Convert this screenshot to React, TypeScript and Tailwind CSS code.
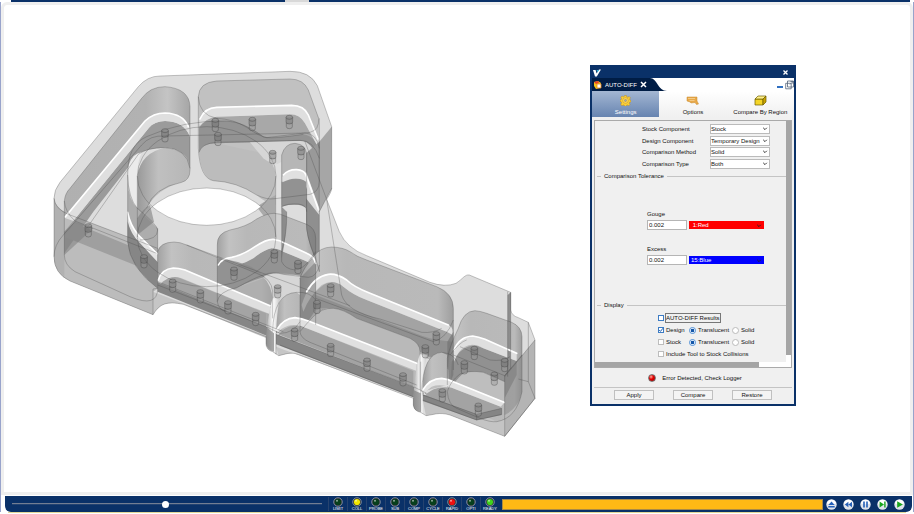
import { useState } from 'react'

const pins = [
  [345, 197], [496, 166], [607, 163], [718, 157], [504, 208], [668, 262], [753, 250],
  [115, 482], [282, 575], [673, 560], [744, 592], [552, 612], [683, 665],
  [368, 648], [451, 680], [534, 713], [617, 748], [842, 662], [801, 712],
  [734, 795], [842, 841], [951, 885], [1059, 929], [1159, 806], [1126, 845],
  [1273, 850], [1364, 886], [1243, 893], [1333, 927], [1177, 977], [1285, 1020],
]

const formRows = [
  { label: 'Stock Component', value: 'Stock' },
  { label: 'Design Component', value: 'Temporary Design' },
  { label: 'Comparison Method', value: 'Solid' },
  { label: 'Comparison Type', value: 'Both' },
]

const leds = [
  { label: 'LIMIT', color: '#07401c' },
  { label: 'COLL', color: '#f2e600' },
  { label: 'PROBE', color: '#07401c' },
  { label: 'SUB', color: '#07401c' },
  { label: 'COMP', color: '#07401c' },
  { label: 'CYCLE', color: '#07401c' },
  { label: 'RAPID', color: '#f01010' },
  { label: 'OPTI', color: '#07401c' },
  { label: 'READY', color: '#3fd21c' },
]

const playback = [
  { name: 'Reset', color: '#2560b8', path: 'M5.5 2.5 8.7 6H2.3ZM2.3 7h6.4v1.4H2.3Z' },
  { name: 'Rewind', color: '#2560b8', path: 'M5.4 2.7v5.6L1.8 5.5ZM9 2.7v5.6L5.4 5.5Z' },
  { name: 'Pause', color: '#2560b8', path: 'M3.2 2.5h1.6v6H3.2ZM6.2 2.5h1.6v6H6.2Z' },
  { name: 'Step', color: '#17a51c', path: 'M2.6 2.4v6.2L7 5.5ZM7.2 2.4h1.4v6.2H7.2Z' },
  { name: 'Play', color: '#17a51c', path: 'M3.2 2.2v6.6L8.9 5.5Z' },
]

const outline =
  'M12 400Q12 375 30 352L265 65Q292 33 330 33L720 19Q780 18 802 62L845 185V370Q845 380 830 403L868 500Q890 550 950 572L1140 652Q1185 668 1218 655C1240 640 1245 628 1258 630L1382 682V735Q1385 752 1405 758L1435 772L1455 825V1000L1364 1114L1200 1050C1165 1040 1150 1050 1128 1052L1112 1042Q1092 1038 1090 1020V1000L745 868C720 860 705 868 686 872L668 860Q648 855 648 835V815L400 718C350 708 330 715 309 749L60 648Q12 625 12 575Z'

const edges = [
  // left pocket
  'M43 408Q45 385 60 370L275 100Q300 65 345 65Q418 70 420 125V315Q420 345 395 352Q310 368 290 430',
  'M12 400Q15 432 55 448L323 550M43 408Q45 440 75 468L320 565M43 408V570Q43 600 75 620L240 695Q323 730 323 670V490',
  'M12 575Q12 540 40 510L275 240Q300 210 345 213L765 204Q800 205 808 250M110 490L265 268Q290 248 345 248Q410 250 420 310',
  // bore
  'M233 330Q232 240 290 215Q400 165 530 168Q580 170 640 215Q655 224 760 208M233 330Q235 400 262 430Q323 480 323 495Q323 525 270 525M233 330V530Q240 610 323 670',
  'M262 333V516M677 333V516',
  // upper pocket
  'M445 95Q447 52 500 48L720 42Q760 42 775 75L806 160Q808 195 780 202L650 218Q630 215 590 187Q550 162 500 160Q447 150 445 95V250Q450 340 490 347Q560 350 620 390Q650 405 675 401L780 388Q808 380 808 350V160',
  'M447 262Q455 235 500 232L750 226Q790 225 808 280M845 370L808 440',
  // narrow pocket
  'M695 590V270Q705 235 735 235Q765 238 770 265V490Q775 530 797 580L808 620V230M695 425Q712 415 745 417Q770 420 770 440M695 590Q705 612 735 615Q760 610 775 590L797 560M695 560Q712 500 710 440',
  'M765 230L830 403L875 690Q890 740 990 762L1115 802Q1150 805 1175 790',
  // centre pocket
  'M502 540Q500 505 540 495Q590 485 620 462Q650 445 672 445Q690 445 710 455L770 478Q797 490 797 520V780M502 540V710Q505 735 530 740M502 710Q505 680 560 668Q610 640 640 630Q670 618 700 628L775 637Q800 636 808 600',
  // lower left pocket
  'M323 560Q330 532 372 531Q390 531 410 540L620 625Q665 640 668 680V760M323 660L648 785L690 805Q730 805 750 770M323 650L700 800M410 540L900 722',
  'M309 749V672L323 670',
  // long pocket
  'M750 800V640Q760 610 790 575Q810 547 845 546Q880 547 900 560Q920 575 950 585L1160 665Q1210 685 1210 730V915M797 700L1150 830Q1190 820 1210 765',
  'M750 800Q770 775 790 755Q815 728 850 730Q880 732 920 760L1080 820Q1110 835 1110 860V975M668 800Q670 685 740 682Q780 680 797 705M750 800Q752 820 780 832L1100 960M678 808L1090 965L1130 985M690 840L1090 995M678 805V868',
  // end pocket
  'M1192 960V880Q1200 840 1225 790Q1240 738 1275 737Q1290 738 1310 745L1385 772Q1415 785 1416 815V980Q1400 1060 1340 1070Q1320 1072 1290 1060L1220 1030Q1195 1020 1192 980Q1200 950 1230 927Q1260 915 1300 922L1364 950',
  'M1115 980Q1120 865 1175 862Q1215 865 1225 900M1200 870Q1230 830 1250 825M1210 870L1364 932L1416 870M1364 932V1114L1455 1000L1435 950L1405 942M1455 825L1364 935M1373 680V935M1382 682V910L1364 932M1435 772V950M1230 845L1320 885Q1360 890 1380 875',
  'M1118 990L1280 1048L1355 1030V1048L1280 1065L1118 1005M1280 1048V1065M1112 890V1040',
]

const highlights = [
  'M46 455L285 168Q310 144 345 144Q400 146 415 185',
  'M450 162Q465 128 500 127L725 121Q762 121 775 150L804 222',
  'M233 442Q240 480 265 510L321 566',
  'M700 330Q715 313 740 314Q762 316 767 328L806 435',
  'M505 600Q515 580 545 577Q580 570 615 545Q650 522 670 523Q690 525 705 535L770 565Q793 575 797 595',
  'M325 645Q335 612 370 609Q385 609 405 615L660 722',
  'M770 680Q795 634 835 628Q860 625 890 645Q910 665 960 685L1195 780',
  'M680 795Q700 760 735 758Q755 760 775 768L1100 895',
  'M1212 855Q1228 815 1268 813Q1285 815 1305 823L1400 865',
  'M1118 975Q1140 940 1175 940Q1195 942 1210 950L1362 1012',
]

function MachinedPart() {
  return (
    <svg viewBox="0 0 1470 1125" className="w-[490px] shrink-0" role="img" aria-label="Translucent design model">
      <defs>
        <linearGradient id="wall">
          <stop offset="0" stopColor="#a2a2a2" />
          <stop offset=".12" stopColor="#c2c2c2" />
          <stop offset=".3" stopColor="#b8b8b8" />
          <stop offset=".9" stopColor="#bababa" />
          <stop offset="1" stopColor="#9e9e9e" />
        </linearGradient>
        <linearGradient id="corner">
          <stop offset="0" stopColor="#b0b0b0" />
          <stop offset=".65" stopColor="#b2b2b2" />
          <stop offset=".82" stopColor="#c4c4c4" />
          <stop offset="1" stopColor="#a6a6a6" />
        </linearGradient>
        <linearGradient id="bore">
          <stop offset="0" stopColor="#999" />
          <stop offset=".4" stopColor="#c0c0c0" />
          <stop offset="1" stopColor="#b6b6b6" />
        </linearGradient>
        <linearGradient id="shine">
          <stop offset="0" stopColor="#aaa" />
          <stop offset=".5" stopColor="#fff" />
          <stop offset="1" stopColor="#c6c6c6" />
        </linearGradient>
        <clipPath id="upperRim">
          <ellipse cx="470" cy="333" rx="208" ry="148" />
        </clipPath>
      </defs>

      {/* body and outer faces */}
      <path d={outline} fill="#dddddd" />
      <path d="M12 400Q15 432 55 448L323 550V672L309 680V749L60 648Q12 625 12 575Z" fill="#bcbcbc" />
      <path d="M12 400Q15 425 43 440V635Q12 610 12 575Z" fill="#b1b1b1" />
      <path d="M845 185V370L808 440V230Z" fill="#a6a6a6" />
      <path d="M309 680L650 812V820L400 718C350 708 330 715 309 749Z" fill="#c6c6c6" />
      <path d="M678 845L1090 1000L745 868C720 860 705 868 686 872Z" fill="#c6c6c6" />
      <path d="M1118 1005L1364 1040V1114L1200 1050C1165 1040 1150 1050 1128 1052Z" fill="#c4c4c4" />
      <path d="M1364 935L1455 825V1000L1364 1114Z" fill="#b4b4b4" />

      {/* left pocket */}
      <path d="M43 408Q45 385 60 370L275 100Q300 65 345 65Q418 70 420 125V190Q400 145 345 145Q310 145 285 170L43 460Z" fill="url(#corner)" />
      <path d="M70 468L297 188Q315 168 345 168Q405 170 420 215V315Q410 250 345 248Q290 248 265 268L130 440L43 565V500Z" fill="#9b9b9b" />
      <path d="M43 458L285 168Q310 143 345 144Q400 145 415 185L420 215Q400 168 345 168Q315 168 297 188L70 468Z" fill="#dfdfdf" />
      <path d="M75 475L323 577V628L43 515Z" fill="#9f9f9f" />
      <path d="M43 500L75 470L130 490L43 570Z" fill="#777" fillOpacity=".5" />

      {/* bore wall */}
      <path d="M262 330Q275 262 345 248Q420 255 420 315Q420 345 395 352Q320 372 290 430L262 470Z" fill="url(#bore)" />
      <path d="M447 262Q455 235 500 232L600 230Q678 280 677 340V420Q640 410 620 390Q560 350 490 347Q455 340 447 262Z" fill="#bcbcbc" />
      <path d="M236 300Q248 265 275 262Q262 290 262 333V430Q235 400 234 330Z" fill="#ebebeb" />
      <path d="M233 350Q236 405 262 430L323 490V670Q235 600 233 530Z" fill="#adadad" />
      <path d="M233 440Q240 480 265 510L323 566V592L258 522Q235 490 233 465Z" fill="#e4e4e4" />
      <path d="M233 470Q240 505 270 535L323 592V670Q235 600 233 530Z" fill="#868686" />
      <path d="M262 460Q280 430 300 420L312 470L262 510Z" fill="#777" fillOpacity=".55" />
      <path d="M620 425Q650 405 677 390V470Q665 460 645 458Z" fill="#aaa" />

      {/* upper pocket */}
      <path d="M445 95Q447 52 500 48L720 42Q760 42 775 75L806 160V300L500 235Q450 235 447 265Z" fill="#c1c1c1" />
      <path d="M447 190Q470 155 500 155L720 148Q750 148 765 175L806 250V300Q790 228 750 228L500 235Q455 235 447 262Z" fill="#a8a8a8" />
      <path d="M447 180Q470 162 530 168Q580 170 640 215Q655 224 760 208Q800 215 806 260V300Q790 228 750 228L500 235Q455 235 447 262Z" fill="#7b7b7b" fillOpacity=".45" />
      <path d="M448 165Q460 125 500 127L725 121Q762 121 775 150L806 225V250L765 175Q750 148 720 148L500 155Q470 158 448 185Z" fill="#dfdfdf" />
      <path d="M600 232L750 228Q790 228 800 290L690 297Q660 297 640 280Z" fill="#d6d6d6" />

      {/* narrow pocket */}
      <path d="M677 300L695 290V560L677 540Z" fill="#e0e0e0" />
      <path d="M695 270Q705 235 735 235Q765 238 770 265V420H695Z" fill="#b6b6b6" />
      <path d="M695 350Q715 335 770 345V430Q745 410 695 425Z" fill="#929292" />
      <path d="M697 335Q715 312 740 314Q762 316 768 330V350Q740 330 697 352Z" fill="#e0e0e0" />
      <path d="M768 265L808 230V450L768 330Z" fill="#999" />
      <path d="M768 320L808 430V470L768 365Z" fill="#dedede" />

      {/* centre pocket */}
      <path d="M502 540Q500 505 540 495Q590 485 620 462Q650 445 672 445Q690 445 710 455L770 478Q797 490 797 520V620L502 660Z" fill="url(#wall)" />
      <path d="M505 640Q510 610 535 605Q570 603 610 580Q640 555 665 550Q680 550 700 560L760 585Q790 595 797 620V700L750 700V632Q690 620 650 630Q610 645 560 668Q505 680 502 710Z" fill="#939393" />
      <path d="M505 600Q515 580 545 577Q580 570 615 545Q650 522 670 523Q690 525 705 535L770 565Q797 578 797 600V620Q790 595 760 585L700 560Q680 550 665 550Q640 555 610 580Q570 603 535 605Q510 610 505 640Z" fill="#dfdfdf" />
      <path d="M695 425L710 440Q712 500 695 580Z" fill="#777" fillOpacity=".7" />
      <path d="M768 400L808 450V630L795 580Q768 520 768 470Z" fill="#7c7c7c" fillOpacity=".8" />
      <path d="M677 440H695V550H677Z" fill="#e0e0e0" fillOpacity=".6" />

      {/* lower left pocket */}
      <path d="M323 560Q330 532 372 531Q390 531 410 540L620 625Q665 640 668 680V790L323 660Z" fill="url(#wall)" />
      <path d="M502 580Q600 590 645 635Q560 660 502 710Z" fill="#888" fillOpacity=".8" />
      <path d="M502 710Q505 680 560 668Q600 655 640 640Q668 655 668 690V730L590 695L502 720Z" fill="#a8a8a8" fillOpacity=".6" />
      <path d="M330 660Q345 635 380 635L648 745V795L323 668Z" fill="#a4a4a4" />
      <path d="M323 650Q330 612 370 609Q385 609 405 615L660 722V748L395 640Q375 632 355 640Q335 650 330 660Z" fill="#dfdfdf" />
      <path d="M323 652L648 785L690 802L650 812L323 680Z" fill="#868686" />
      <path d="M640 636Q670 618 700 628L775 638Q750 660 750 682Q700 680 686 720L668 705Q665 660 640 636Z" fill="#d6d6d6" />

      {/* long pocket */}
      <path d="M750 640Q760 610 790 575Q810 547 845 546Q880 547 900 560Q920 575 950 585L1160 665Q1210 685 1210 730V900L750 790Z" fill="url(#wall)" />
      <path d="M755 740Q790 680 820 660Q850 640 880 665Q910 690 950 705L1200 805L1210 840V925L1110 850L900 765Q850 730 830 730Q790 740 750 810Z" fill="#a3a3a3" />
      <path d="M797 690L1115 812Q1150 825 1210 830V915L1110 860L1080 820L920 760Q880 732 850 730H797Z" fill="#858585" fillOpacity=".65" />
      <path d="M755 720Q780 640 835 628Q860 625 890 645Q910 665 960 685L1195 780Q1208 785 1208 800V810L1190 800L950 705Q910 690 880 665Q850 640 815 660Q780 690 760 740Z" fill="#dfdfdf" />
      <path d="M750 640L797 590V735L750 805Z" fill="#6f6f6f" fillOpacity=".5" />

      {/* lower middle pocket */}
      <path d="M750 810Q770 775 790 755Q815 728 850 730Q880 732 920 760L1080 820Q1110 835 1110 860V970L750 830Z" fill="#b9b9b9" />
      <path d="M672 800Q670 685 740 682L750 690V800Z" fill="url(#bore)" />
      <path d="M678 820Q700 780 740 782L770 790L1090 918V965L690 810Z" fill="#a3a3a3" />
      <path d="M680 795Q700 760 735 758Q755 760 775 768L1100 895V918L770 790Q740 775 715 782Q690 790 683 805Z" fill="#e0e0e0" />
      <path d="M678 808L1090 965L1130 985L1090 997L678 838Z" fill="#868686" />
      <path d="M648 815Q655 740 668 700L690 700Q676 760 678 865L668 860Q650 855 648 835Z" fill="url(#shine)" />
      <path d="M648 785L672 805V860Q650 855 648 835Z" fill="#858585" fillOpacity=".75" />

      {/* end pocket */}
      <path d="M1195 900Q1200 840 1225 790Q1240 738 1275 737Q1290 738 1310 745L1385 772Q1415 785 1416 815V980Q1400 1060 1340 1070L1200 1000Z" fill="url(#wall)" />
      <path d="M1205 890Q1240 838 1280 842L1400 888V930L1364 1000V950L1300 922Q1250 915 1200 970Z" fill="#919191" />
      <path d="M1210 860Q1225 815 1268 813Q1285 815 1305 823L1400 865V888L1300 850Q1270 832 1245 845Q1225 855 1212 890Z" fill="#dfdfdf" />
      <path d="M1200 975Q1230 925 1250 922Q1290 915 1320 930L1364 950V1012L1200 950Z" fill="#bebebe" />
      <path d="M1364 935L1416 870V980Q1405 1030 1364 1050Z" fill="#808080" fillOpacity=".45" />
      <path d="M1115 980Q1120 865 1175 862L1192 870V960Z" fill="url(#bore)" />
      <path d="M1192 830L1210 800V930L1192 970Z" fill="#6f6f6f" fillOpacity=".6" />
      <path d="M1122 995Q1150 960 1205 968L1352 1025V1035L1280 1050L1118 990Z" fill="#a3a3a3" />
      <path d="M1118 975Q1140 940 1175 940Q1195 942 1210 950L1364 1012L1352 1025L1205 968Q1170 955 1145 965Q1130 975 1122 990Z" fill="#e2e2e2" />
      <path d="M1118 988L1280 1048L1355 1030V1050L1280 1066L1118 1008Z" fill="#858585" />
      <path d="M1090 1000Q1095 905 1110 868L1132 870Q1112 930 1120 1046L1112 1042Q1092 1038 1090 1020Z" fill="url(#shine)" />
      <path d="M1090 975L1112 985V1042Q1092 1038 1090 1020Z" fill="#858585" fillOpacity=".75" />
      <path d="M1373 690L1382 682V910L1373 920Z" fill="#8d8d8d" />

      {/* through hole */}
      <g clipPath="url(#upperRim)">
        <ellipse cx="470" cy="517" rx="208" ry="148" fill="#fff" />
      </g>

      <g fill="none" stroke="#fff" strokeWidth="5" strokeLinecap="round">
        {highlights.map((d) => (
          <path key={d} d={d} />
        ))}
      </g>

      <g fill="none" stroke="#444" strokeOpacity=".6" strokeWidth="1.5">
        <ellipse cx="470" cy="333" rx="208" ry="148" />
        <ellipse cx="470" cy="517" rx="208" ry="148" />
        <path d={outline} />
        {edges.map((d) => (
          <path key={d} d={d} />
        ))}
      </g>

      <g stroke="#333" strokeOpacity=".65" strokeWidth="1.5">
        {pins.map(([x, y]) => (
          <g key={`${x}-${y}`}>
            <path d={`M${x - 9} ${y + 16}v12a9 6 0 0 0 18 0v-12`} fill="#999" fillOpacity=".35" />
            <path d={`M${x - 10} ${y}v14a10 6 0 0 0 20 0v-14`} fill="#666" fillOpacity=".4" />
            <ellipse cx={x} cy={y} rx="10" ry="6" fill="#888" fillOpacity=".6" />
          </g>
        ))}
      </g>
    </svg>
  )
}

function Chevron() {
  return (
    <svg viewBox="0 0 6 4" className="pointer-events-none absolute right-0.5 top-[3px] h-1 w-1.5" fill="none" stroke="#222">
      <path d="M1.2 .8 3 2.6 4.8 .8" strokeWidth=".9" />
    </svg>
  )
}

function GroupTitle({ title }: { title: string }) {
  return (
    <div className="flex h-2 items-center gap-[3px] pl-0.5">
      <span className="h-px w-1 bg-[#c4c4c4]" />
      <h2>{title}</h2>
      <span className="h-px flex-1 bg-[#c4c4c4]" />
    </div>
  )
}

function Tolerance({ name, option, color }: { name: string; option: string; color: string }) {
  return (
    <div className="pl-[52px]">
      <label htmlFor={name} className="block h-2 leading-2">{name}</label>
      <div className="mt-0.5 flex items-center gap-0.5">
        <input id={name} defaultValue="0.002" className="h-[10px] w-10 border border-[#b5b5b5] bg-white px-px" />
        <div className="relative">
          <select
            aria-label={`${name} color`}
            className={`block h-2 w-[75px] appearance-none pl-0.5 leading-2 text-white ${color}`}
          >
            <option>{option}</option>
          </select>
          <Chevron />
        </div>
      </div>
    </div>
  )
}

function CheckBox({ label, checked = false, strong = false, focused = false }: { label: string; checked?: boolean; strong?: boolean; focused?: boolean }) {
  return (
    <label className="flex items-center gap-0.5">
      <span className="relative flex">
        <input
          type="checkbox"
          defaultChecked={checked}
          className={`peer size-1.5 appearance-none border bg-white ${strong ? 'border-[#3d7cc4]' : 'border-[#bdbdbd]'}`}
        />
        <svg viewBox="0 0 6 6" className="pointer-events-none absolute inset-0 hidden size-1.5 peer-checked:block" fill="none" stroke="#1d62b5">
          <path d="M1.2 3 2.5 4.4 5 1.2" />
        </svg>
      </span>
      <span className={focused ? 'outline outline-[#777]' : ''}>{label}</span>
    </label>
  )
}

function Radio({ group, label, checked = false }: { group: string; label: string; checked?: boolean }) {
  return (
    <label className="flex items-center gap-0.5">
      <input
        type="radio"
        name={group}
        defaultChecked={checked}
        className="size-[7px] appearance-none rounded-full border border-[#bbb] bg-white checked:border-[#4d8ed6] checked:bg-radial checked:from-[#1456a8] checked:from-40% checked:to-white checked:to-60%"
      />
      {label}
    </label>
  )
}

function Dialog() {
  return (
    <section className="w-[206px] shrink-0 border-2 border-[#0a3168] bg-[#f0f0f0] text-[6px] leading-2 text-[#111]">
      <header className="flex h-[11px] items-center justify-between bg-[#0a3168] pr-[5px] pl-px">
        <svg viewBox="0 0 8 8" className="size-2">
          <path d="M0 1h2.6l1 3.6L6 .5h2L3.8 7.5H2Z" fill="#fff" />
          <path d="M3.5 1H6L4.500 3.400Z" fill="#39b5dc" />
        </svg>
        <button aria-label="Close" className="size-[7px]">
          <svg viewBox="0 0 7 7" stroke="#fff" strokeWidth="1.3"><path d="m1.5 1.5 4 4M5.5 1.5l-4 4" /></svg>
        </button>
      </header>

      <div className="flex h-[13px] items-center bg-white">
        <div className="flex h-full items-center gap-[3px] bg-[#001d45] pl-0.5 text-white">
          <svg viewBox="0 0 8 8" className="size-2">
            <path d="M0 1 4 0l3 2-1 5-4 1L0 5Z" fill="#f2c21b" />
            <path d="m0 1 4-1 1 2-3 1Z" fill="#e8422a" />
            <path d="M3 3h4v4H3Z" fill="#fff" stroke="#e88a1a" strokeWidth=".8" />
          </svg>
          <span>AUTO-DIFF</span>
          <button aria-label="Close tab" className="size-[7px]">
            <svg viewBox="0 0 7 7" stroke="#fff" strokeWidth="1.5"><path d="m1 1 5 5M6 1 1 6" /></svg>
          </button>
        </div>
        <svg viewBox="0 0 20 13" className="h-[13px] w-5">
          <path d="M0 0h3C10 0 11 13 20 13H0Z" fill="#001d45" />
        </svg>
        <div className="ml-auto flex items-center gap-0.5">
          <button aria-label="Minimize" className="mt-1 h-0.5 w-1.5 bg-[#2f6fc0]" />
          <button aria-label="Detach" className="h-[10px] w-[9px]">
            <svg viewBox="0 0 9 10" fill="#fff" stroke="#55657a" strokeWidth=".8">
              <path d="M2.5 1h6v6h-6ZM.7 3.3h5.5v5.5H.7ZM5 4.5 8 1.5M5.5 1.5H8V4" />
            </svg>
          </button>
        </div>
      </div>

      <nav className="grid h-[26px] grid-cols-3 bg-linear-to-b from-white to-[#f0f0f0]">
        <button className="flex flex-col items-center gap-0.5 bg-linear-to-b from-[#a4b7d3] to-[#6784b0] pt-1 text-white">
          <svg viewBox="0 0 24 24" className="size-[11px]">
            <path d="M10 1h4l.7 3 2.5 1 2.7-1.7 2.8 2.8L21 8.8l1 2.500 2 .7v3l-3 .7-1 2.300 1.700 2.600-2.800 2.800-2.600-1.700-2.300 1-.7 2.300h-3l-.7-2.300-2.500-1-2.600 1.700-2.800-2.800L3.400 17l-1-2.300L0 14v-3l2.400-.7 1-2.500L1.700 5.100 4.500 2.300 7.100 4l2.200-1Z" fill="#f9cf3a" stroke="#bd8410" />
            <circle cx="12" cy="12" r="6" fill="#ffe06a" stroke="#bd8410" />
            <circle cx="12" cy="12" r="2.500" fill="#8fa6c6" stroke="#bd8410" />
          </svg>
          Settings
        </button>
        <button className="flex flex-col items-center gap-0.5 pt-1">
          <svg viewBox="0 0 13 11" className="h-[11px] w-[13px]">
            <path d="M1 2h10v4l1.500 3-2 .5-1.500-2-4 .5-1-1-3-1Z" fill="#e8a94a" stroke="#c98b2c" strokeWidth=".5" />
            <path d="M2 3.500h7M3.500 5.500h5" stroke="#f6d394" strokeWidth=".8" />
          </svg>
          Options
        </button>
        <button className="flex flex-col items-center gap-0.5 whitespace-nowrap pt-1">
          <svg viewBox="0 0 13 11" className="h-[11px] w-[13px]" stroke="#6b5b00" strokeWidth=".7">
            <path d="M1 4h8v6H1Z" fill="#f4d527" />
            <path d="m1 4 3-3h8L9 4Z" fill="#fff08a" />
            <path d="m9 4 3-3v6l-3 3Z" fill="#c9a400" />
          </svg>
          Compare By Region
        </button>
      </nav>

      <div className="mx-0.5 mt-[3px] border border-[#aaa]">
        <div className="flex">
          <div className="flex-1 pt-[3px] pb-0.5">
            <div className="flex h-[45px] flex-col justify-between">
              {formRows.map(({ label, value }) => (
                <div key={label} className="flex items-center pl-[47px]">
                  <label htmlFor={label} className="w-[68px]">{label}</label>
                  <div className="relative">
                    <select id={label} className="block h-[10px] w-[60px] appearance-none border border-[#bbb] bg-white leading-2">
                      <option>{value}</option>
                    </select>
                    <Chevron />
                  </div>
                </div>
              ))}
            </div>

            <div className="mt-[3px]"><GroupTitle title="Comparison Tolerance" /></div>
            <div className="mt-[30px] flex flex-col gap-[15px]">
              <Tolerance name="Gouge" option="&nbsp;1:Red" color="bg-[#ff0000]" />
              <Tolerance name="Excess" option="15:Blue" color="bg-[#0000ff]" />
            </div>

            <div className="mt-9"><GroupTitle title="Display" /></div>
            <div className="mt-[3px] grid auto-rows-[12px] grid-cols-[31px_43px_1fr] items-center pl-[63px]">
              <div className="col-span-3 flex"><CheckBox label="AUTO-DIFF Results" strong focused /></div>
              <CheckBox label="Design" checked strong />
              <Radio group="design" label="Translucent" checked />
              <Radio group="design" label="Solid" />
              <CheckBox label="Stock" />
              <Radio group="stock" label="Translucent" checked />
              <Radio group="stock" label="Solid" />
              <div className="col-span-3 whitespace-nowrap"><CheckBox label="Include Tool to Stock Collisions" /></div>
            </div>
          </div>
          <div className="flex w-[5px] bg-white pb-[7px]">
            <div className="flex-1 bg-[#a5a5a5]" />
          </div>
        </div>
        <div className="flex h-[5px] bg-white pr-[5px]">
          <div className="w-6/7 bg-[#a5a5a5]" />
          <div className="flex-1 bg-white" />
        </div>
      </div>

      <div className="flex h-[19px] items-center justify-center gap-1.5 pl-1">
        <span className="size-2 rounded-full border border-[#777] bg-radial-[at_35%_30%] from-[#ffb0a0] via-[#e60000] via-40% to-[#8b0000]" />
        Error Detected, Check Logger
      </div>

      <footer className="mx-0.5 flex justify-center gap-[19px] border-t border-[#c4c4c4] pt-0.5 pb-1">
        <button className="h-[10px] w-10 border border-[#c0c0c0] bg-[#f4f4f4]">Apply</button>
        <button className="h-[10px] w-10 border border-[#c0c0c0] bg-[#f4f4f4]">Compare</button>
        <button className="h-[10px] w-10 border border-[#c0c0c0] bg-[#f4f4f4]">Restore</button>
      </footer>
    </section>
  )
}

function StatusBar() {
  const [speed, setSpeed] = useState(495)

  return (
    <footer className="mr-px ml-px flex h-4 items-center rounded-b-md bg-[#0a3168] pr-[7px] pl-[7px]">
      <input
        type="range"
        min="0"
        max="1000"
        value={speed}
        onChange={(e) => setSpeed(Number(e.target.value))}
        aria-label="Speed"
        className="h-2 w-[310px] appearance-none bg-linear-to-b from-transparent from-40% via-[#8a8f9c] via-40% to-transparent to-60% [&::-webkit-slider-thumb]:size-[7px] [&::-webkit-slider-thumb]:appearance-none [&::-webkit-slider-thumb]:rounded-full [&::-webkit-slider-thumb]:bg-white"
      />
      <div className="ml-1.5 flex">
        {leds.map(({ label, color }) => (
          <div key={label} className="flex w-[19px] flex-col items-center border-l border-[#26436f] text-[4px] leading-1 text-white">
            <svg viewBox="0 0 10 10" className="size-[10px]">
              <circle cx="5" cy="5" r="4.200" fill="#141a20" stroke="#9ba5ae" strokeWidth=".9" />
              <circle cx="5" cy="5" r="3.100" fill={color} />
              <circle cx="4" cy="3.800" r="1" fill="#fff" fillOpacity=".55" />
            </svg>
            {label}
          </div>
        ))}
      </div>
      <div className="ml-[3px] h-[11px] flex-1 border border-[#a98a45] bg-[#ffb915]" />
      <div className="ml-[3px] flex gap-1.5">
        {playback.map(({ name, color, path }) => (
          <button key={name} aria-label={name} className="size-[11px]">
            <svg viewBox="0 0 11 11">
              <circle cx="5.500" cy="5.500" r="5.200" fill="#dfe3ea" />
              <path d="M.8 4.500a4.800 4.800 0 0 1 9.400 0Q5.500 6 .8 4.500Z" fill="#fff" />
              <path d={path} fill={color} />
            </svg>
          </button>
        ))}
      </div>
    </footer>
  )
}

export default function App() {
  return (
    <div className="flex min-h-screen flex-col bg-white font-['Liberation_Sans',Arial,sans-serif]">
      <div className="mr-1 ml-[11px] flex h-0.5 bg-[#0a3168]">
        <div className="ml-[274px] w-6 bg-[#d8d8d8]" />
      </div>
      <div className="flex flex-1 flex-col border-x border-[#98a3cb]">
        <main className="flex flex-1 items-start gap-[50px] rounded-t-md border-[3px] border-[#efefef] bg-white pt-15 pl-[46px]">
          <MachinedPart />
          <Dialog />
        </main>
        <div className="pt-px pl-[3px]">
          <StatusBar />
        </div>
      </div>
      <div className="mx-2 h-px bg-[#e3d89a]" />
      <div className="h-px" />
    </div>
  )
}
